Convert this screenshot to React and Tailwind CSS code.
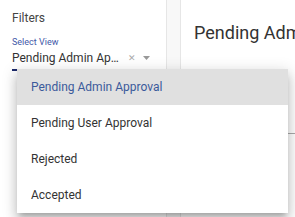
import React from 'react';

const options = [
    'Pending Admin Approval',
    'Pending User Approval',
    'Rejected',
    'Accepted',
];

const SelectView = ({ value }) => (
    <div className="mt-[10px]">
        <div className="text-[9px] leading-[12px] text-[#3f58a8]">Select View</div>
        <div className="mt-[3px] flex items-center border-b-2 border-[#1d2a6b] pb-[4px]">
            <span className="w-[109px] truncate text-[12px] leading-[14px] text-[#333]">{value}</span>
            <span className="ml-[7px] text-[9px] leading-none text-[#aaa]">✕</span>
            <svg className="ml-[7px]" width="7" height="4" viewBox="0 0 7 4">
                <path d="M0 0 L7 0 L3.5 4 Z" fill="#999" />
            </svg>
        </div>
    </div>
);

const DropdownMenu = ({ items, selected }) => (
    <div className="absolute left-[17px] top-[69px] w-[271px] bg-white shadow-[0_5px_5px_-3px_rgba(0,0,0,0.2),0_8px_10px_1px_rgba(0,0,0,0.14),0_3px_14px_2px_rgba(0,0,0,0.12)]">
        {items.map((item) => (
            <div
                key={item}
                className={
                    item === selected
                        ? 'flex h-[36px] items-center bg-[#e0e0e0] pl-[14px] text-[12px] text-[#3b5a9b]'
                        : 'flex h-[36px] items-center pl-[14px] text-[12px] text-[#333]'
                }
            >
                {item}
            </div>
        ))}
    </div>
);

export default function App() {
    const selected = options[0];

    return (
        <div className="relative flex h-[217px] w-[295px] overflow-hidden bg-white font-['Roboto',sans-serif]">
            {/* sidebar */}
            <div className="w-[166px] shrink-0 px-3 pt-[10px]">
                <div className="text-[12px] leading-[16px] text-[#444]">Filters</div>
                <SelectView value={selected} />
            </div>

            {/* divider strip */}
            <div className="w-[15px] shrink-0 border-x border-[#e6e6e6] bg-[#f8f8f8]" />

            {/* main */}
            <div className="min-w-0 flex-1">
                <div className="whitespace-nowrap pl-[13px] pt-[21px] text-[18px] leading-[24px] text-[#333]">
                    Pending Admin Approval
                </div>
                <div className="mt-[88px] h-px bg-[#aaa]" />
            </div>

            <DropdownMenu items={options} selected={selected} />
        </div>
    );
}
